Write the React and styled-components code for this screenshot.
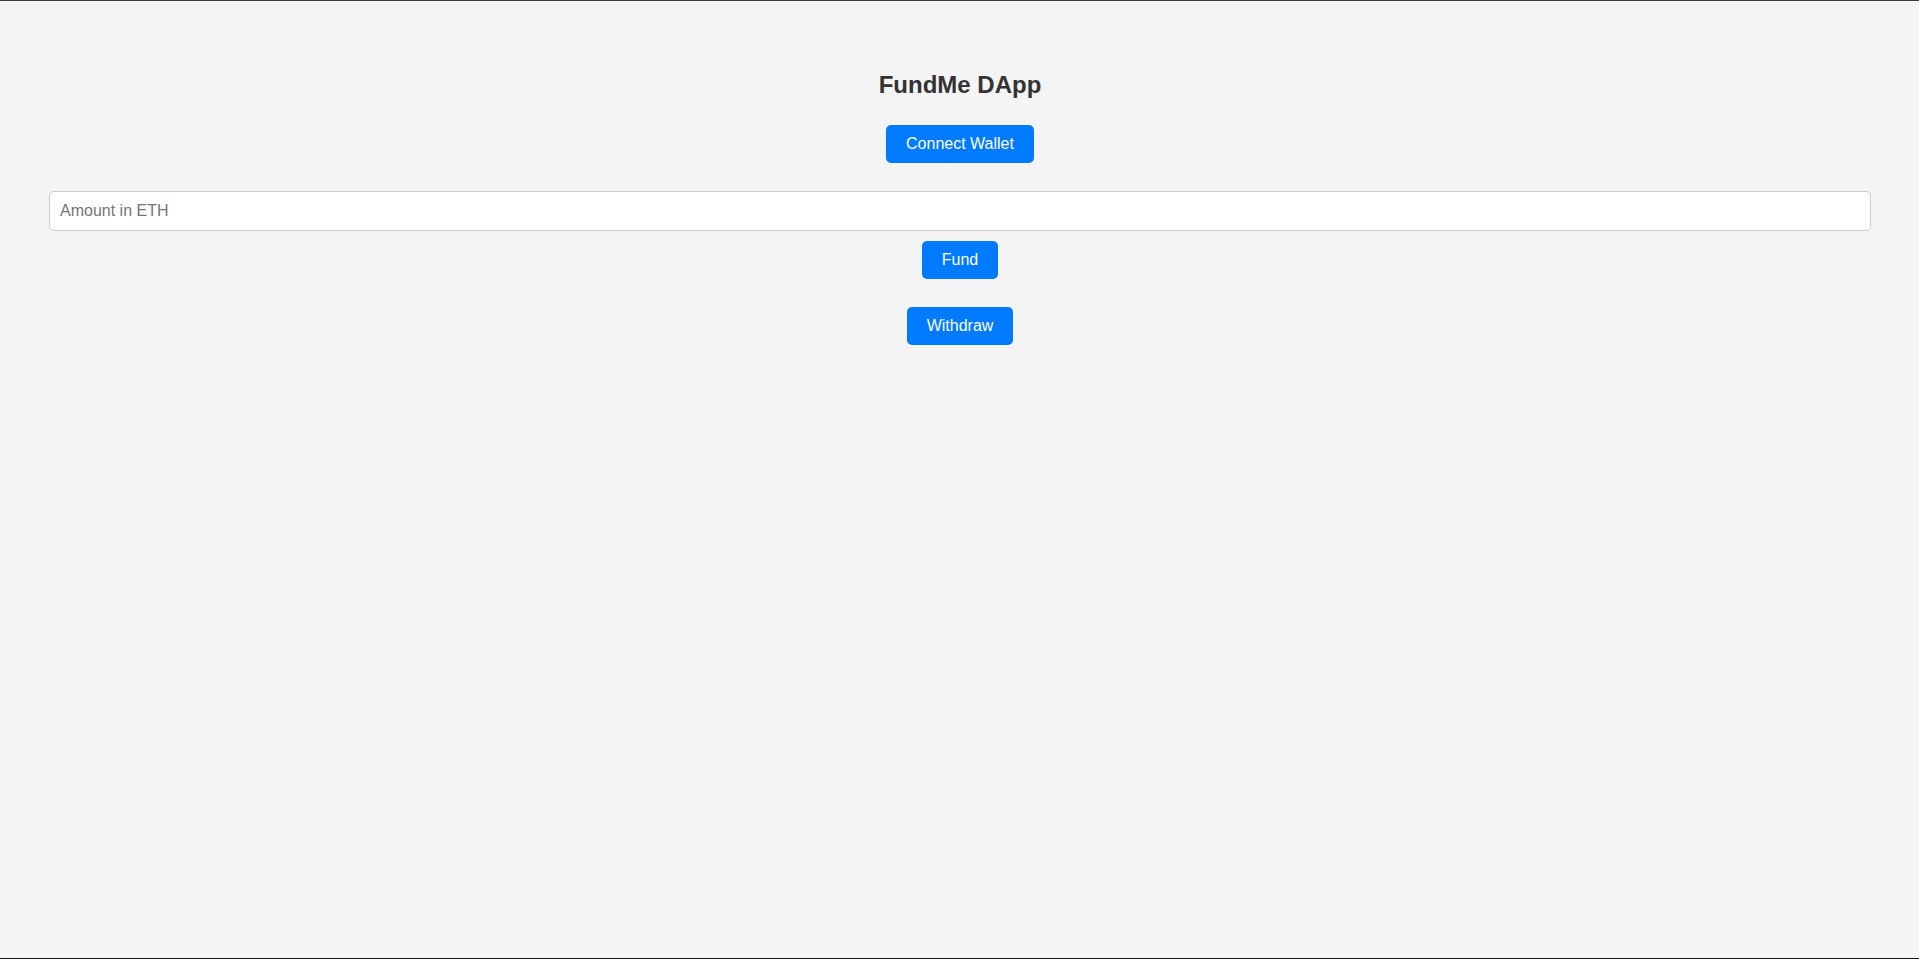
import styled, { createGlobalStyle } from 'styled-components';

const GlobalStyle = createGlobalStyle`
  html, body {
    margin: 0;
    padding: 0;
    background: #f4f4f4;
    font-family: 'Liberation Sans', Arial, sans-serif;
  }
`;

export default function App() {
  return (
    <>
      <GlobalStyle />
      <Page>
        <Title>FundMe DApp</Title>
        <Button>Connect Wallet</Button>
        <FundForm>
          <AmountInput type="text" placeholder="Amount in ETH" />
          <Button>Fund</Button>
        </FundForm>
        <Button>Withdraw</Button>
      </Page>
    </>
  );
}

const Page = styled.div`
  min-height: 100vh;
  box-sizing: border-box;
  border-top: 1px solid #3c3d38;
  border-bottom: 1px solid #111;
  padding: 70px 48px 40px 49px;
  display: flex;
  flex-direction: column;
  align-items: center;
  gap: 27.6px;
  color: #333;
`;

const Title = styled.h2`
  margin: 0 0 -2px;
  font-size: 24px;
  font-weight: bold;
  color: #333;
`;

const FundForm = styled.div`
  align-self: stretch;
  display: flex;
  flex-direction: column;
  align-items: center;
  gap: 10px;
  margin-top: 1px;
`;

const AmountInput = styled.input`
  align-self: stretch;
  box-sizing: border-box;
  padding: 10px;
  font-size: 16px;
  font-family: 'Liberation Sans', Arial, sans-serif;
  border: 1px solid #ccc;
  border-radius: 5px;
  background: #fff;
  color: #333;
  outline: none;

  &::placeholder {
    color: #757575;
  }
`;

const Button = styled.button`
  padding: 10px 20px;
  font-size: 16px;
  font-family: 'Liberation Sans', Arial, sans-serif;
  color: #fff;
  background-color: #007bff;
  border: none;
  border-radius: 5px;
  cursor: pointer;
`;
